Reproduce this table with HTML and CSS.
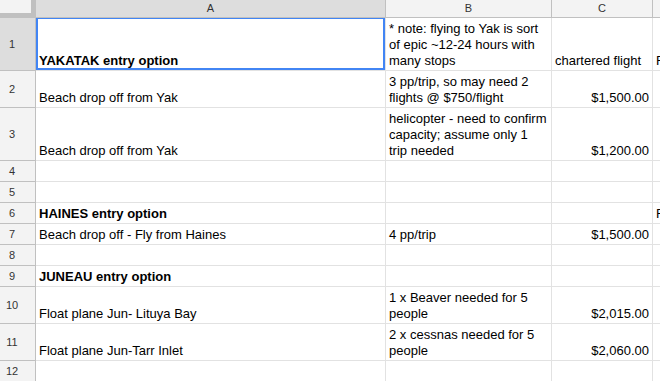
FILE: index.html
```html
<!DOCTYPE html>
<html lang="en">
<head>
  <meta charset="UTF-8" />
  <title>Entry options</title>
  <link rel="stylesheet" href="styles.css">
</head>
<body>
  <table class="sheet">
    <colgroup>
      <col class="c-num">
      <col class="c-a">
      <col class="c-b">
      <col class="c-c">
      <col class="c-d">
    </colgroup>
    <tr class="head">
      <th class="corner"></th>
      <th class="col sel">A</th>
      <th class="col">B</th>
      <th class="col">C</th>
      <th class="col"></th>
    </tr>
    <tr>
      <th class="num sel">1</th>
      <td class="active"><b>YAKATAK entry option</b><div class="cursor"></div></td>
      <td>* note: flying to Yak is sort of epic ~12-24 hours with many stops</td>
      <td>chartered flight</td>
      <td class="over">F</td>
    </tr>
    <tr>
      <th class="num">2</th>
      <td>Beach drop off from Yak</td>
      <td>3 pp/trip, so may need 2 flights @ $750/flight</td>
      <td class="money">$1,500.00</td>
      <td></td>
    </tr>
    <tr>
      <th class="num">3</th>
      <td>Beach drop off from Yak</td>
      <td>helicopter - need to confirm capacity; assume only 1 trip needed</td>
      <td class="money">$1,200.00</td>
      <td></td>
    </tr>
    <tr class="empty">
      <th class="num">4</th>
      <td></td><td></td><td></td><td></td>
    </tr>
    <tr class="empty">
      <th class="num">5</th>
      <td></td><td></td><td></td><td></td>
    </tr>
    <tr>
      <th class="num">6</th>
      <td><b>HAINES entry option</b></td>
      <td></td>
      <td></td>
      <td class="over">F</td>
    </tr>
    <tr>
      <th class="num">7</th>
      <td>Beach drop off - Fly from Haines</td>
      <td>4 pp/trip</td>
      <td class="money">$1,500.00</td>
      <td></td>
    </tr>
    <tr class="empty">
      <th class="num">8</th>
      <td></td><td></td><td></td><td></td>
    </tr>
    <tr>
      <th class="num">9</th>
      <td><b>JUNEAU entry option</b></td>
      <td></td><td></td><td></td>
    </tr>
    <tr>
      <th class="num">10</th>
      <td>Float plane Jun- Lituya Bay</td>
      <td>1 x Beaver needed for 5 people</td>
      <td class="money">$2,015.00</td>
      <td></td>
    </tr>
    <tr>
      <th class="num">11</th>
      <td>Float plane Jun-Tarr Inlet</td>
      <td>2 x cessnas needed for 5 people</td>
      <td class="money">$2,060.00</td>
      <td></td>
    </tr>
    <tr class="empty">
      <th class="num">12</th>
      <td></td><td></td><td></td><td></td>
    </tr>
  </table>
</body>
</html>
```

FILE: styles.css
```css
* { margin: 0; padding: 0; box-sizing: border-box; }

body {
  font-family: 'Liberation Sans', Arial, sans-serif;
  font-size: 13px;
  color: #000;
  background: #fff;
  overflow: hidden;
}

.sheet {
  border-collapse: separate;
  border-spacing: 0;
  table-layout: fixed;
  width: 753px;
}

.c-num { width: 36px; }
.c-a { width: 350px; }
.c-b { width: 166px; }
.c-c { width: 101px; }
.c-d { width: 100px; }

.sheet td {
  border-right: 1px solid #e2e2e2;
  border-bottom: 1px solid #e2e2e2;
  padding: 3px 3px 1px;
  line-height: 16px;
  vertical-align: bottom;
  overflow: hidden;
}

.sheet td b { font-weight: bold; }

.money { text-align: right; }

.over { white-space: nowrap; overflow: visible; }

.empty { height: 21px; }

.head { height: 18px; }

.sheet th {
  font-weight: normal;
  font-size: 11px;
  color: #333;
  background: #f3f3f3;
  border-right: 1px solid #c0c0c0;
  border-bottom: 1px solid #c0c0c0;
  text-align: center;
  vertical-align: middle;
  line-height: 13px;
}

.sheet th.sel { background: #dddddd; }

.sheet th.num { padding-right: 11px; }

.corner {
  box-shadow: inset -4px -4px 0 #c0c0c0;
}

/* selected cell outline */
.active { position: relative; }

.cursor {
  position: absolute;
  top: -1px;
  left: 0;
  right: 0;
  bottom: 0;
  border: 2px solid #4285f4;
  pointer-events: none;
}
```
